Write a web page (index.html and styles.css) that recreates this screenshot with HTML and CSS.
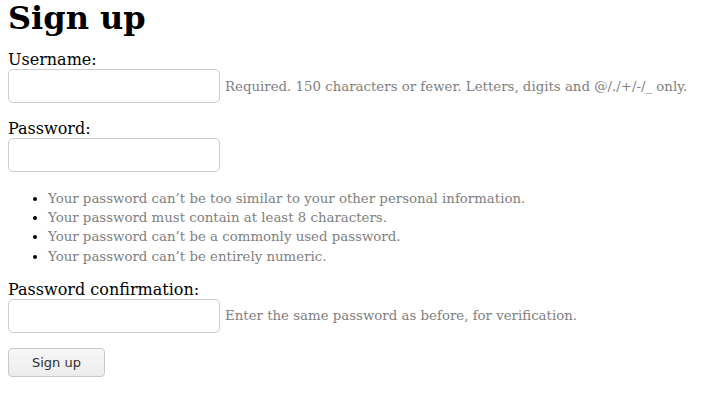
FILE: index.html
```html
<!DOCTYPE html>
<html lang="en">
<head>
<meta charset="utf-8">
<title>Sign up</title>
<link rel="stylesheet" href="styles.css">
</head>
<body>
<h1 class="title">Sign up</h1>
<form class="form">
  <div class="field">
    <label class="label" for="u">Username:</label>
    <div class="row">
      <input class="input" id="u" type="text">
      <span class="help">Required. 150 characters or fewer. Letters, digits and @/./+/-/_ only.</span>
    </div>
  </div>
  <div class="field field-list">
    <label class="label" for="p1">Password:</label>
    <div class="row">
      <input class="input" id="p1" type="password">
    </div>
    <ul class="rules">
      <li><span class="help">Your password can’t be too similar to your other personal information.</span></li>
      <li><span class="help">Your password must contain at least 8 characters.</span></li>
      <li><span class="help">Your password can’t be a commonly used password.</span></li>
      <li><span class="help">Your password can’t be entirely numeric.</span></li>
    </ul>
  </div>
  <div class="field field-last">
    <label class="label" for="p2">Password confirmation:</label>
    <div class="row">
      <input class="input" id="p2" type="password">
      <span class="help">Enter the same password as before, for verification.</span>
    </div>
  </div>
  <button class="btn" type="button">Sign up</button>
</form>
</body>
</html>
```

FILE: styles.css
```css
html, body {
  background: #fff;
}
body {
  margin: 0 8px;
  font-family: "DejaVu Serif", serif;
  font-size: 16px;
  color: #000;
}
.title {
  font-size: 32px;
  font-weight: bold;
  margin: 0 0 14px;
  line-height: 36px;
}
.form {
  display: flex;
  flex-direction: column;
}
.field {
  display: flex;
  flex-direction: column;
  margin-bottom: 16px;
}
.field-list {
  margin-bottom: 14px;
}
.field-last {
  margin-bottom: 15px;
}
.label {
  display: block;
  line-height: 19px;
}
.row {
  display: flex;
  align-items: center;
  gap: 5px;
}
.input {
  box-sizing: border-box;
  width: 212px;
  height: 34px;
  margin: 0;
  border: 1px solid #ccc;
  border-radius: 5px;
  background: #fff;
  font: inherit;
  padding: 4px 8px;
}
.help {
  font-size: 13.333px;
  color: #808080;
}
.rules {
  margin: 17px 0 0;
  padding-left: 40px;
  line-height: 19.2px;
}
.rules li {
  font-size: 13.333px;
}
.btn {
  align-self: flex-start;
  box-sizing: border-box;
  width: 97px;
  height: 29px;
  margin: 0;
  border: 1px solid #c8c8c8;
  border-radius: 4px;
  background: linear-gradient(#f7f7f7, #ececec);
  font-family: "DejaVu Sans", sans-serif;
  font-size: 13px;
  color: #2e2e2e;
}
```
